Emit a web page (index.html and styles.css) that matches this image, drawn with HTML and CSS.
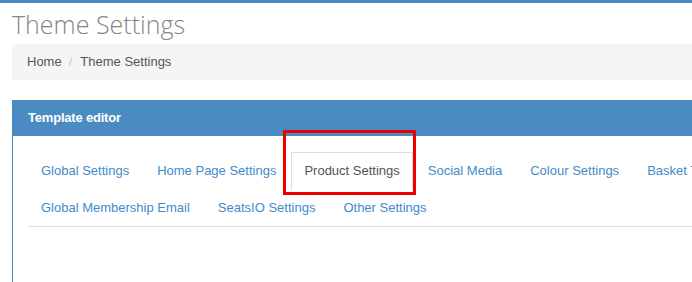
FILE: index.html
```html
<!DOCTYPE html>
<html lang="en">
<head>
  <meta charset="UTF-8">
  <title>Theme Settings</title>
  <link rel="stylesheet" href="styles.css">
</head>
<body>
  <div class="page">
    <h1 class="page-title">Theme Settings</h1>
    <ol class="breadcrumb">
      <li><a href="#">Home</a></li>
      <li class="active">Theme Settings</li>
    </ol>

    <div class="panel">
      <div class="panel-heading">Template editor</div>
      <div class="panel-body">
        <ul class="nav-tabs">
          <li><a href="#">Global Settings</a></li>
          <li><a href="#">Home Page Settings</a></li>
          <li class="active"><a href="#">Product Settings</a><span class="highlight"></span></li>
          <li><a href="#">Social Media</a></li>
          <li><a href="#">Colour Settings</a></li>
          <li><a href="#">Basket Timer</a></li>
          <li><a href="#">Global Membership Email</a></li>
          <li><a href="#">SeatsIO Settings</a></li>
          <li><a href="#">Other Settings</a></li>
        </ul>
      </div>
    </div>
  </div>
</body>
</html>
```

FILE: styles.css
```css
:root {
  --brand: #4a8bc2;
  --link: #428bca;
  --text: #555555;
  --border: #dddddd;
}

html, body {
  margin: 0;
  padding: 0;
}

body {
  font-family: "Liberation Sans", Arial, sans-serif;
  font-size: 13px;
  color: var(--text);
  background: #ffffff;
  border-top: 3px solid var(--brand);
  overflow: hidden;
}

.page {
  width: 860px;
  padding: 0 0 0 12px;
}

.page-title {
  font-family: "Open Sans", sans-serif;
  font-weight: 300;
  font-size: 25px;
  line-height: 36px;
  color: #858585;
  margin: 3px 0 2px;
}

.breadcrumb {
  list-style: none;
  margin: 0 0 20px;
  padding: 8px 15px;
  line-height: 20px;
  background: #f5f5f5;
  display: flex;
}

.breadcrumb li + li::before {
  content: "/";
  color: #cccccc;
  padding: 0 8px 0 7px;
}

.breadcrumb a {
  color: var(--text);
  text-decoration: none;
}

.panel {
  border-left: 1px solid var(--brand);
}

.panel-heading {
  background: var(--brand);
  color: #ffffff;
  font-weight: bold;
  line-height: 16px;
  padding: 10px 15px;
  letter-spacing: -0.2px;
}

.panel-body {
  padding: 16px 15px;
  min-height: 120px;
}

.nav-tabs {
  list-style: none;
  margin: 0;
  padding: 0;
  display: flex;
  flex-wrap: wrap;
  width: 820px;
  border-bottom: 1px solid var(--border);
}

.nav-tabs li {
  position: relative;
  margin: 0 2px -1px 0;
}

.nav-tabs a {
  display: block;
  padding: 8px 12px 9px;
  line-height: 19px;
  border: 1px solid transparent;
  color: var(--link);
  text-decoration: none;
}

.nav-tabs .active a {
  color: var(--text);
  border-color: var(--border);
  border-bottom-color: #ffffff;
  background: #ffffff;
}

.highlight {
  position: absolute;
  left: -8px;
  top: -22px;
  width: 127px;
  height: 59px;
  border: 3px solid #ee0000;
  pointer-events: none;
}
```
